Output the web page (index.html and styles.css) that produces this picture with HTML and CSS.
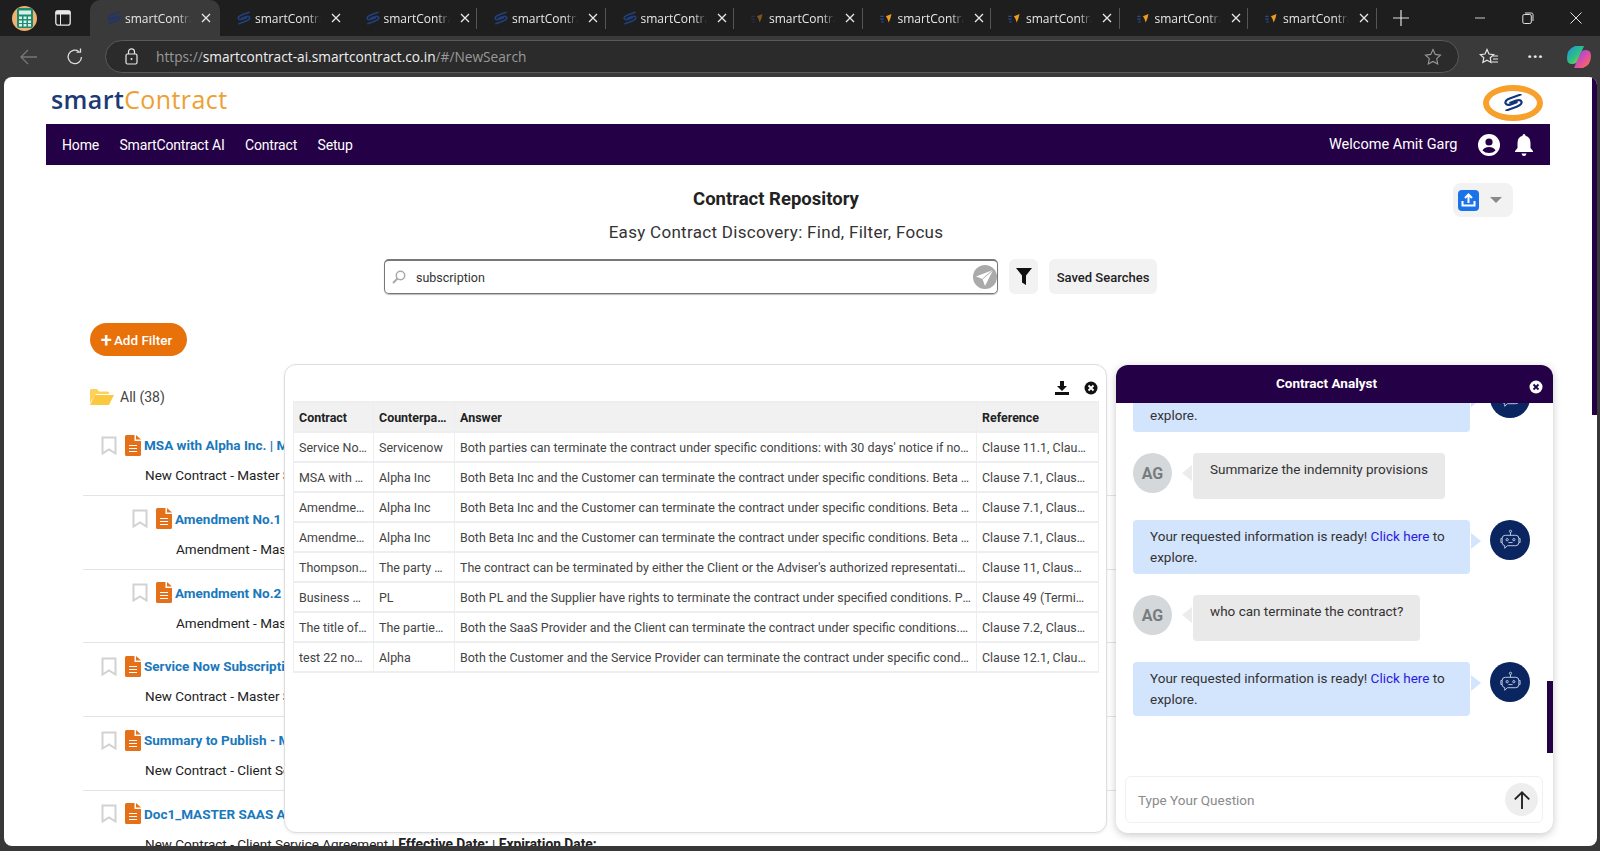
FILE: index.html
```html
<!DOCTYPE html>
<html lang="en">
<head>
<meta charset="utf-8">
<title>smartContract</title>
<link rel="stylesheet" href="styles.css">
</head>
<body>
<svg class="defs" width="0" height="0" aria-hidden="true">
  <symbol id="chain" viewBox="0 0 24 16"><g transform="rotate(-20 12 8)" fill="none" stroke="currentColor" stroke-width="2.100" stroke-linecap="round"><path d="M21 3.200H10.500Q5 3.200 4.500 6Q4.500 8.800 9 8.800H15"/><path d="M3 12.800H13.500Q19 12.800 19.500 10Q19.500 7.200 15 7.200H9"/></g></symbol>
  <symbol id="spark" viewBox="0 0 16 16"><path d="M2 6.500h3M2 9h3M3 11.500h2" stroke="#2d4a8c" stroke-width="1.200"/><path d="M7 6.500l5-2-1 4-1.500 3.500-1.200-3.500z" fill="#f09a1f"/></symbol>
  <symbol id="close" viewBox="0 0 12 12"><path d="M2 2l8 8M10 2l-8 8" stroke="currentColor" stroke-width="1.300"/></symbol>
  <symbol id="bookmark" viewBox="0 0 16 19"><path d="M1.500 1.500h13v16L8 13.500l-6.500 4z" fill="none" stroke="#d2d2d2" stroke-width="2"/></symbol>
  <symbol id="doc" viewBox="0 0 16 21"><path d="M0 1.500Q0 0 1.500 0H9.500V6H16V19.500Q16 21 14.500 21H1.500Q0 21 0 19.500z" fill="#e5701a"/><path d="M11 0l5 4.500h-5z" fill="#e5701a"/><path d="M4 10.500h8M4 13.500h8M4 16.500h8" stroke="#fff" stroke-width="1.200"/></symbol>
  <symbol id="bot" viewBox="0 0 24 24"><circle cx="12" cy="3.200" r="1.100" fill="none" stroke="#c4d0e6" stroke-width=".9"/><path d="M12 4.300V7M7 7H17Q20 7 20 10V14Q20 17 17 17H9L6.500 19.500V17Q4 16.500 4 14V10Q4 7 7 7ZM4 10H2.800V14H4M20 10H21.200V14H20M10 14H14" fill="none" stroke="#c4d0e6" stroke-width=".9"/><circle cx="8.800" cy="11.200" r="1.100" fill="none" stroke="#c4d0e6" stroke-width=".9"/><circle cx="15.200" cy="11.200" r="1.100" fill="none" stroke="#c4d0e6" stroke-width=".9"/></symbol>
</svg>

<div class="tabstrip">
  <span class="app-icon"><svg width="16" height="20" viewBox="0 0 16 20"><rect width="16" height="20" rx="2" fill="#1f8a70"/><rect x="2" y="2.500" width="12" height="4" fill="#d5f2ea"/><path d="M2 8.500h3v2.500H2zM6.500 8.500h3v2.500h-3zM11 8.500h3v2.500h-3zM2 12.500h3v2.500H2zM6.500 12.500h3v2.500h-3zM11 12.500h3v2.500h-3zM2 16h3v2.500H2zM6.500 16h3v2.500h-3zM11 16h3v2.500h-3z" fill="#d5f2ea"/></svg></span>
  <span class="panes-icon"><svg width="16" height="16" viewBox="0 0 16 16"><rect x=".8" y=".8" width="14.400" height="14.400" rx="2.500" fill="none" stroke="#e8e8e8" stroke-width="1.300"/><path d="M1 1h14v3H1zM5.500 4v11" fill="#e8e8e8" stroke="#e8e8e8"/></svg></span>
  <div class="tab tab-active"><svg class="fav fav-dim"><use href="#chain"/></svg><span class="tab-label">smartContract</span><svg class="tab-x"><use href="#close"/></svg></div>
  <div class="tab"><svg class="fav"><use href="#chain"/></svg><span class="tab-label">smartContract</span><svg class="tab-x"><use href="#close"/></svg></div>
  <div class="tab"><svg class="fav"><use href="#chain"/></svg><span class="tab-label">smartContract</span><svg class="tab-x"><use href="#close"/></svg></div>
  <div class="tab"><svg class="fav"><use href="#chain"/></svg><span class="tab-label">smartContract</span><svg class="tab-x"><use href="#close"/></svg></div>
  <div class="tab"><svg class="fav"><use href="#chain"/></svg><span class="tab-label">smartContract</span><svg class="tab-x"><use href="#close"/></svg></div>
  <div class="tab"><svg class="fav fav-faint"><use href="#spark"/></svg><span class="tab-label">smartContract</span><svg class="tab-x"><use href="#close"/></svg></div>
  <div class="tab"><svg class="fav"><use href="#spark"/></svg><span class="tab-label">smartContract</span><svg class="tab-x"><use href="#close"/></svg></div>
  <div class="tab"><svg class="fav"><use href="#spark"/></svg><span class="tab-label">smartContract</span><svg class="tab-x"><use href="#close"/></svg></div>
  <div class="tab"><svg class="fav"><use href="#spark"/></svg><span class="tab-label">smartContract</span><svg class="tab-x"><use href="#close"/></svg></div>
  <div class="tab"><svg class="fav"><use href="#spark"/></svg><span class="tab-label">smartContract</span><svg class="tab-x"><use href="#close"/></svg></div>
  <span class="new-tab"><svg width="16" height="16" viewBox="0 0 16 16"><path d="M8 0v16M0 8h16" stroke="#e0e0e0" stroke-width="1.200"/></svg></span>
  <div class="win-controls">
    <svg width="12" height="12" viewBox="0 0 12 12"><path d="M1 6h10" stroke="#ccc" stroke-width="1"/></svg>
    <svg width="12" height="12" viewBox="0 0 12 12"><rect x=".8" y="2.500" width="8.500" height="9" rx="1.500" fill="none" stroke="#e0e0e0"/><path d="M3 1h6.500Q11 1 11 2.500V9" fill="none" stroke="#e0e0e0"/></svg>
    <svg width="12" height="12" viewBox="0 0 12 12"><path d="M.5.500l11 11M11.500.500l-11 11" stroke="#e0e0e0" stroke-width="1"/></svg>
  </div>
</div>

<div class="toolbar">
  <svg class="tb-back" width="18" height="16" viewBox="0 0 18 16"><path d="M8 1L1 8l7 7M1 8h16" fill="none" stroke="#777" stroke-width="1.300"/></svg>
  <svg class="tb-reload" width="18" height="18" viewBox="0 0 18 18"><path d="M15.500 9A6.700 6.700 0 1 1 12.800 3.500" fill="none" stroke="#ddd" stroke-width="1.300"/><path d="M10 3.800h4V0" transform="translate(.5 .4)" fill="none" stroke="#ddd" stroke-width="1.300"/></svg>
  <div class="urlbar">
    <svg class="lock" width="13" height="17" viewBox="0 0 13 17"><rect x="1" y="6" width="11" height="10" rx="1.500" fill="none" stroke="#e8e8e8" stroke-width="1.200"/><path d="M3.500 6V3.800a3 3 0 0 1 6 0V6" fill="none" stroke="#e8e8e8" stroke-width="1.200"/><circle cx="6.500" cy="11" r="1" fill="#e8e8e8"/></svg>
    <span class="url"><span class="url-dim">https://</span>smartcontract-ai.smartcontract.co.in<span class="url-dim">/#/NewSearch</span></span>
    <svg class="url-star" width="18" height="18" viewBox="0 0 18 18"><path d="M9 1.500l2.300 4.900 5.200.7-3.800 3.600 1 5.200L9 13.400l-4.700 2.500 1-5.200L1.500 7.100l5.200-.7z" fill="none" stroke="#999" stroke-width="1.100"/></svg>
  </div>
  <svg class="tb-fav" width="20" height="18" viewBox="0 0 20 18"><path d="M8 1.500l2 4.500 4.700.6-3.500 3.200.9 4.700L8 12.300l-4.100 2.200.9-4.700L1.300 6.600 6 6z" fill="none" stroke="#e8e8e8" stroke-width="1.200"/><path d="M14 8h5M14 11h5M13 14h6" stroke="#e8e8e8" stroke-width="1.100"/></svg>
  <span class="tb-dots">···</span>
  <svg class="tb-copilot" width="24" height="24" viewBox="0 0 24 24"><defs><linearGradient id="cpa" x1="0" y1="0" x2="1" y2="1"><stop offset="0" stop-color="#1b8fe8"/><stop offset=".55" stop-color="#2fc27f"/><stop offset="1" stop-color="#f5c518"/></linearGradient><linearGradient id="cpb" x1="0" y1="0" x2="1" y2="1"><stop offset="0" stop-color="#6f4cf0"/><stop offset=".6" stop-color="#e8509c"/><stop offset="1" stop-color="#f5821f"/></linearGradient></defs><path d="M8 1h9L11 15Q10 19 5 19 0 19 0 13 0 4 8 1z" fill="url(#cpa)"/><path d="M16 23H7L13 9Q14 5 19 5 24 5 24 11 24 20 16 23z" fill="url(#cpb)"/></svg>
</div>

<div class="page">
  <header class="brand-row">
    <div class="logo"><span class="logo-navy">smart</span><span class="logo-orange">Contract</span></div>
    <div class="brand-badge"><svg class="badge-mark"><use href="#chain"/></svg></div>
  </header>

  <nav class="navbar">
    <a class="nav-link">Home</a>
    <a class="nav-link">SmartContract AI</a>
    <a class="nav-link">Contract</a>
    <a class="nav-link">Setup</a>
    <span class="welcome">Welcome Amit Garg</span>
    <svg class="nav-user" width="22" height="22" viewBox="0 0 22 22"><circle cx="11" cy="11" r="11" fill="#fff"/><circle cx="11" cy="8" r="3.600" fill="#240046"/><path d="M4.500 16.500Q6 13 11 13t6.500 3.500Q15 19 11 19t-6.500-2.500z" fill="#240046"/></svg>
    <svg class="nav-bell" width="18" height="22" viewBox="0 0 18 22"><path d="M9 0q1.500 0 1.500 1.800Q15.500 3 15.500 9v5L18 17v1H0v-1l2.500-3V9Q2.500 3 7.500 1.800 7.500 0 9 0zM6.500 19.500h5Q11 22 9 22t-2.500-2.500z" fill="#fff"/></svg>
  </nav>

  <section class="hero">
    <span></span>
    <div class="hero-text">
      <h1 class="hero-title">Contract Repository</h1>
      <p class="hero-sub">Easy Contract Discovery: Find, Filter, Focus</p>
    </div>
    <div class="upload-btn">
      <svg width="21" height="21" viewBox="0 0 21 21"><rect width="21" height="21" rx="4" fill="#1a73e8"/><path d="M10.500 13V5M7 8l3.500-3.500L14 8" fill="none" stroke="#fff" stroke-width="2"/><path d="M4.500 11v4.500h12V11" fill="none" stroke="#fff" stroke-width="2"/></svg>
      <span class="caret-down"></span>
    </div>
  </section>

  <section class="search-row">
    <div class="searchbox">
      <svg width="14" height="14" viewBox="0 0 14 14"><circle cx="8.500" cy="5.500" r="4.200" fill="none" stroke="#aaa" stroke-width="1.500"/><path d="M5.500 8.500L1 13" stroke="#aaa" stroke-width="2"/></svg>
      <span class="search-value">subscription</span>
      <svg class="search-send" width="24" height="24" viewBox="0 0 24 24"><circle cx="12" cy="12" r="12" fill="#aaa"/><path d="M20 5L3 11.500l6.500 2.500 2.500 7z" fill="#fff"/><path d="M20 5L9.500 14" stroke="#aaa" stroke-width="1"/></svg>
    </div>
    <button class="filter-btn"><svg width="16" height="17" viewBox="0 0 16 17"><path d="M0 0h16L10 7.500V17L6 14.500V7.500z" fill="#111"/></svg></button>
    <button class="saved-btn">Saved Searches</button>
  </section>

  <button class="add-filter"><span class="plus">+</span>Add Filter</button>

  <div class="folder-row">
    <svg width="24" height="16" viewBox="0 0 24 16"><path d="M0 14V1.500Q0 0 1.500 0H7l2 2.500h9Q19 2.500 19 4V5H6L0 14z" fill="#fcd15c"/><path d="M5 6h19l-5 10H0z" fill="#fbc93f"/></svg>
    <span>All (38)</span>
  </div>

  <ul class="doc-list">
    <li class="doc-row">
      <div class="doc-head"><svg class="bm"><use href="#bookmark"/></svg><svg class="di"><use href="#doc"/></svg><a class="doc-title">MSA with Alpha Inc. | MSA</a></div>
      <p class="doc-sub">New Contract - Master Service Agreement</p>
    </li>
    <li class="doc-row doc-child">
      <div class="doc-head"><svg class="bm"><use href="#bookmark"/></svg><svg class="di"><use href="#doc"/></svg><a class="doc-title">Amendment No.1</a></div>
      <p class="doc-sub">Amendment - Master Service Agreement</p>
    </li>
    <li class="doc-row doc-child">
      <div class="doc-head"><svg class="bm"><use href="#bookmark"/></svg><svg class="di"><use href="#doc"/></svg><a class="doc-title">Amendment No.2</a></div>
      <p class="doc-sub">Amendment - Master Service Agreement</p>
    </li>
    <li class="doc-row">
      <div class="doc-head"><svg class="bm"><use href="#bookmark"/></svg><svg class="di"><use href="#doc"/></svg><a class="doc-title">Service Now Subscription Agreement</a></div>
      <p class="doc-sub">New Contract - Master Service Agreement</p>
    </li>
    <li class="doc-row">
      <div class="doc-head"><svg class="bm"><use href="#bookmark"/></svg><svg class="di"><use href="#doc"/></svg><a class="doc-title">Summary to Publish - Master</a></div>
      <p class="doc-sub">New Contract - Client Service Agreement</p>
    </li>
    <li class="doc-row">
      <div class="doc-head"><svg class="bm"><use href="#bookmark"/></svg><svg class="di"><use href="#doc"/></svg><a class="doc-title">Doc1_MASTER SAAS AGREEMENT</a></div>
      <p class="doc-sub">New Contract - Client Service Agreement | <b>Effective Date:</b> | <b>Expiration Date:</b></p>
    </li>
  </ul>

  <section class="answer-modal">
    <div class="modal-tools">
      <svg width="14" height="14" viewBox="0 0 14 14"><path d="M5 0h4v5h3L7 10 2 5h3zM0 11h14v3H0z" fill="#111"/></svg>
      <svg width="14" height="14" viewBox="0 0 14 14"><circle cx="7" cy="7" r="6.500" fill="#111"/><path d="M4.500 4.500l5 5M9.500 4.500l-5 5" stroke="#fff" stroke-width="1.800"/></svg>
    </div>
    <table class="answers">
      <colgroup><col class="c1"><col class="c2"><col class="c3"><col class="c4"></colgroup>
      <thead><tr><th>Contract</th><th>Counterparty</th><th>Answer</th><th>Reference</th></tr></thead>
      <tbody>
        <tr><td>Service Now Subscription</td><td>Servicenow</td><td>Both parties can terminate the contract under specific conditions: with 30 days' notice if not renewed by the other party in time</td><td>Clause 11.1, Clause 11.2, Clause 11.3</td></tr>
        <tr><td>MSA with Alpha Inc.</td><td>Alpha Inc</td><td>Both Beta Inc and the Customer can terminate the contract under specific conditions. Beta Inc may terminate for cause at any time</td><td>Clause 7.1, Clause 7.2, Clause 7.3</td></tr>
        <tr><td>Amendment No.1</td><td>Alpha Inc</td><td>Both Beta Inc and the Customer can terminate the contract under specific conditions. Beta Inc may terminate for cause at any time</td><td>Clause 7.1, Clause 7.2, Clause 7.3</td></tr>
        <tr><td>Amendment No.2</td><td>Alpha Inc</td><td>Both Beta Inc and the Customer can terminate the contract under specific conditions. Beta Inc may terminate for cause at any time</td><td>Clause 7.1, Clause 7.2, Clause 7.3</td></tr>
        <tr><td>Thompson Agreement</td><td>The party of the first part</td><td>The contract can be terminated by either the Client or the Adviser's authorized representative by written notice to the other party</td><td>Clause 11, Clause 12, Clause 13</td></tr>
        <tr><td>Business Master Agreement</td><td>PL</td><td>Both PL and the Supplier have rights to terminate the contract under specified conditions. PL may terminate for convenience on notice</td><td>Clause 49 (Termination), Clause 50</td></tr>
        <tr><td>The title of the agreement</td><td>The parties to this</td><td>Both the SaaS Provider and the Client can terminate the contract under specific conditions. Either party may terminate for breach</td><td>Clause 7.2, Clause 7.3, Clause 7.4</td></tr>
        <tr><td>test 22 nov agreement</td><td>Alpha</td><td>Both the Customer and the Service Provider can terminate the contract under specific conditions relating to breach of any term</td><td>Clause 12.1, Clause 12.2, Clause 12.3</td></tr>
      </tbody>
    </table>
  </section>

  <aside class="chat">
    <div class="chat-head"><span>Contract Analyst</span>
      <svg class="chat-close" width="14" height="14" viewBox="0 0 14 14"><circle cx="7" cy="7" r="6.500" fill="#fff"/><path d="M4.500 4.500l5 5M9.500 4.500l-5 5" stroke="#240046" stroke-width="1.800"/></svg>
    </div>
    <div class="chat-log">
      <div class="msg msg-bot"><div class="bubble bubble-bot">Your requested information is ready! <a class="link">Click here</a> to explore.</div><span class="avatar-bot"><svg><use href="#bot"/></svg></span></div>
      <div class="msg msg-user"><span class="avatar-user">AG</span><div class="bubble bubble-user">Summarize the indemnity provisions</div></div>
      <div class="msg msg-bot"><div class="bubble bubble-bot">Your requested information is ready! <a class="link">Click here</a> to explore.</div><span class="avatar-bot"><svg><use href="#bot"/></svg></span></div>
      <div class="msg msg-user"><span class="avatar-user">AG</span><div class="bubble bubble-user">who can terminate the contract?</div></div>
      <div class="msg msg-bot"><div class="bubble bubble-bot">Your requested information is ready! <a class="link">Click here</a> to explore.</div><span class="avatar-bot"><svg><use href="#bot"/></svg></span></div>
    </div>
    <div class="chat-input">
      <span class="placeholder">Type Your Question</span>
      <span class="send"><svg width="20" height="20" viewBox="0 0 18 18"><path d="M9 17V2M2.500 8.500L9 2l6.500 6.500" fill="none" stroke="#222" stroke-width="1.700"/></svg></span>
    </div>
    <span class="chat-thumb"></span>
  </aside>

  <span class="page-thumb"></span>
</div>
</body>
</html>
```
FILE: styles.css
```css
* { box-sizing: border-box; }
html, body { margin: 0; height: 851px; overflow: hidden; }
body { background: #383838; font-family: Roboto, "Liberation Sans", sans-serif; font-size: 14px; color: #222; }
.defs { position: absolute; }

/* browser chrome */
.tabstrip { display: flex; align-items: center; height: 36px; background: #1e1e1e; color: #e8e8e8; padding-left: 12px; }
.app-icon { width: 25px; height: 25px; border-radius: 50%; background: #f0b070; display: flex; align-items: center; justify-content: center; }
.panes-icon { margin-left: 18px; margin-right: 19px; display: flex; }
.tab { width: 128.500px; height: 36px; flex: none; display: flex; align-items: center; padding-left: 15px; position: relative; }
.tab::after { content: ""; position: absolute; right: 0; top: 8px; height: 21px; width: 1px; background: #555; }
.tab-active { background: #3a3a3a; border-radius: 10px 10px 0 0; width: 130px; }
.tab-active::after, .tab:nth-of-type(2)::after { display: none; }
.fav { width: 18px; height: 18px; flex: none; color: #21407f; }
.fav-dim { color: #1f3470; }
.fav-faint { opacity: .45; }
.tab-label { margin-left: 2px; width: 66px; overflow: hidden; white-space: nowrap; font-family: "Open Sans", sans-serif; font-size: 12px; -webkit-mask-image: linear-gradient(90deg, #000 80%, transparent); mask-image: linear-gradient(90deg, #000 80%, transparent); }
.tab-x { width: 12px; height: 12px; margin-left: 9px; color: #e8e8e8; flex: none; }
.new-tab { margin-left: 16px; display: flex; }
.win-controls { margin-left: auto; display: flex; gap: 36px; padding-right: 18px; }

.toolbar { height: 41px; background: #3a3a3a; display: flex; align-items: center; padding-left: 20px; }
.tb-back { flex: none; }
.tb-reload { margin-left: 28px; flex: none; }
.urlbar { margin-left: 21px; width: 1354px; height: 33px; background: #2b2b2b; border: 1px solid #5a5a5a; border-radius: 17px; display: flex; align-items: center; padding-left: 19px; padding-right: 16px; }
.lock { flex: none; }
.url { margin-left: 18px; font-family: "Open Sans", sans-serif; font-size: 13.700px; color: #f0f0f0; }
.url-dim { color: #9a9a9a; }
.url-star { margin-left: auto; }
.tb-fav { margin-left: 20px; flex: none; }
.tb-dots { margin-left: 28px; color: #e8e8e8; font-size: 18px; font-weight: 700; width: 20px; }
.tb-copilot { margin-left: 20px; flex: none; }

/* page */
.page { position: relative; margin-left: 4px; width: 1593px; height: 769px; background: #fff; border-radius: 8px 8px 8px 8px; overflow: hidden; }
.page-thumb { position: absolute; right: 0; top: 0; width: 5px; height: 338px; background: #240046; }
.brand-row { height: 47px; display: flex; align-items: center; justify-content: space-between; padding: 0 54px 0 47px; }
.logo { font-family: "Open Sans", sans-serif; font-size: 25px; letter-spacing: .4px; line-height: 1; margin-top: -2px; }
.logo-navy { color: #1c3a75; font-weight: 600; }
.logo-orange { color: #eda033; }
.brand-badge { width: 60px; height: 36px; margin-top: 4px; border: 6px solid #f7a02c; border-radius: 50%; display: flex; align-items: center; justify-content: center; }
.badge-mark { width: 25px; height: 17px; color: #12357b; }

.navbar { margin-left: 42px; width: 1504px; height: 41px; background: #240046; color: #fff; display: flex; align-items: center; padding: 0 17px 0 16px; gap: 20.300px; }
.nav-link { font-size: 14px; letter-spacing: -.15px; }
.welcome { margin-left: auto; font-size: 14.500px; }
.nav-bell { margin-left: -5px; }

.hero { margin-left: 35px; width: 1474px; display: grid; grid-template-columns: 60px 1fr 60px; height: 94px; padding-top: 18px; }
.hero-text { padding-top: 5px; }
.hero-title { margin: 0; font-size: 18.500px; line-height: 22px; font-weight: 700; text-align: center; color: #222; }
.hero-sub { margin: 11px 0 0; font-size: 17px; line-height: 22px; text-align: center; letter-spacing: .3px; color: #333; }
.upload-btn { width: 60px; height: 34px; background: #f2f2f2; border-radius: 8px; display: flex; align-items: center; padding-left: 5px; }
.caret-down { margin-left: 11px; width: 0; height: 0; border: 6px solid transparent; border-top: 6px solid #8a8a8a; border-bottom: 0; }

.search-row { display: flex; height: 35px; margin-left: 380px; }
.searchbox { width: 614px; border: 1px solid #777; border-top-width: 2px; border-radius: 5px; display: flex; align-items: center; padding: 0 0 0 7px; box-shadow: 0 1px 1px #bbb; }
.search-value { margin-left: 10px; font-size: 12.500px; color: #333; }
.search-send { margin-left: auto; }
.filter-btn { margin-left: 11px; width: 29px; border: 0; background: #f2f2f2; border-radius: 6px; padding: 0; display: flex; align-items: center; justify-content: center; }
.saved-btn { margin-left: 11px; width: 108px; border: 0; background: #f2f2f2; border-radius: 6px; padding: 2px 0 0; font: 500 13px Roboto, sans-serif; color: #222; }

.add-filter { display: flex; align-items: center; justify-content: center; margin: 29px 0 0 86px; width: 97px; height: 33px; border: 0; border-radius: 17px; background: #e8710a; color: #fff; font: 500 13.500px Roboto, sans-serif; padding: 0 4px 0 0; }
.plus { font-size: 20px; line-height: 1; margin-right: 2px; }

.folder-row { display: flex; align-items: center; gap: 6px; margin: 32px 0 0 86px; color: #444; height: 18px; }

.doc-list { list-style: none; margin: 16px 0 0 79px; padding: 0; width: 1450px; }
.doc-row { height: 73.800px; border-bottom: 1px solid #e4e4e4; padding-top: 11px; }
.doc-head { display: flex; align-items: center; height: 24px; padding-left: 18px; }
.doc-child .doc-head { padding-left: 49px; }
.bm { width: 16px; height: 19px; flex: none; }
.di { width: 16px; height: 21px; margin-left: 8px; flex: none; }
.doc-title { margin-left: 3px; font-weight: 700; font-size: 13.500px; color: #1a78bd; white-space: nowrap; }
.doc-sub { margin: 8px 0 0 62px; font-size: 13.500px; line-height: 20px; white-space: nowrap; color: #222; }
.doc-sub b { font-size: 13.800px; }
.doc-child .doc-sub { margin-left: 93px; }

/* overlays */
.answer-modal { position: absolute; left: 280px; top: 287px; width: 823px; height: 469px; background: #fff; border: 1px solid #dedede; border-radius: 12px; padding: 0 8px; box-shadow: 0 1px 3px rgba(0,0,0,.08); }
.modal-tools { height: 36px; display: flex; justify-content: flex-end; align-items: flex-end; gap: 15px; padding: 0 0 6px; }
.answers { table-layout: fixed; border-collapse: collapse; width: 805px; font-size: 12.450px; color: #444; }
.c1 { width: 80px; } .c2 { width: 81px; } .c3 { width: 522px; } .c4 { width: 122px; }
.answers th, .answers td { height: 30px; padding: 0 5px; border: 2px solid #eee; border-left-width: 1px; border-right-width: 1px; overflow: hidden; white-space: nowrap; text-overflow: ellipsis; text-align: left; }
.answers td:last-child { padding-right: 10px; }
.answers th { font-weight: 700; color: #222; background: #f1f1f1; }

.chat { position: absolute; left: 1112px; top: 288px; width: 437px; height: 468px; background: #fff; border-radius: 12px; box-shadow: 0 2px 8px rgba(0,0,0,.22); display: flex; flex-direction: column; overflow: hidden; }
.chat-head { height: 38px; flex: none; background: #240046; color: #fff; font-weight: 700; font-size: 13.500px; display: flex; align-items: center; justify-content: center; padding: 0 16px 3px 0; position: relative; z-index: 2; }
.chat-close { position: absolute; right: 10px; top: 15px; }
.chat-log { flex: 1; min-height: 0; overflow: hidden; display: flex; flex-direction: column; justify-content: flex-end; gap: 21px; padding: 0 23px 60px 17px; }
.msg { display: flex; flex: none; align-items: flex-start; }
.msg-bot { gap: 20px; }
.bubble { position: relative; font-size: 13.500px; line-height: 21px; border-radius: 4px; padding: 6px 17px; color: #333; }
.bubble-bot { width: 337px; height: 54px; background: #d3e4fd; }
.bubble-bot::after { content: ""; position: absolute; left: 100%; top: 13px; border: 8px solid transparent; border-left: 10px solid #d3e4fd; border-right: 0; margin-left: 1px; }
.bubble-user { height: 46px; background: #e9e9e9; margin-left: 21px; }
.bubble-user::before { content: ""; position: absolute; right: 100%; top: 12px; border: 8px solid transparent; border-right: 10px solid #ececec; border-left: 0; margin-right: 1px; }
.link { color: #2a1be0; }
.avatar-bot { width: 40px; height: 40px; flex: none; border-radius: 50%; background: #0b2560; display: flex; align-items: center; justify-content: center; }
.avatar-bot svg { width: 25px; height: 25px; }
.avatar-user { width: 39px; height: 40px; flex: none; border-radius: 50%; background: #d5d8da; color: #787c7f; font-weight: 700; font-size: 16px; display: flex; align-items: center; justify-content: center; }
.chat-input { flex: none; height: 47px; margin: 0 10px 10px 9px; border: 1px solid #f0f0f0; border-radius: 6px; display: flex; align-items: center; justify-content: space-between; padding: 0 4px 0 12px; }
.placeholder { font-size: 13.500px; color: #8a8a8a; }
.send { width: 33px; height: 33px; border-radius: 50%; background: #eee; display: flex; align-items: center; justify-content: center; }
.chat-thumb { position: absolute; right: 0; top: 316px; width: 6px; height: 72px; background: #240046; }
```
